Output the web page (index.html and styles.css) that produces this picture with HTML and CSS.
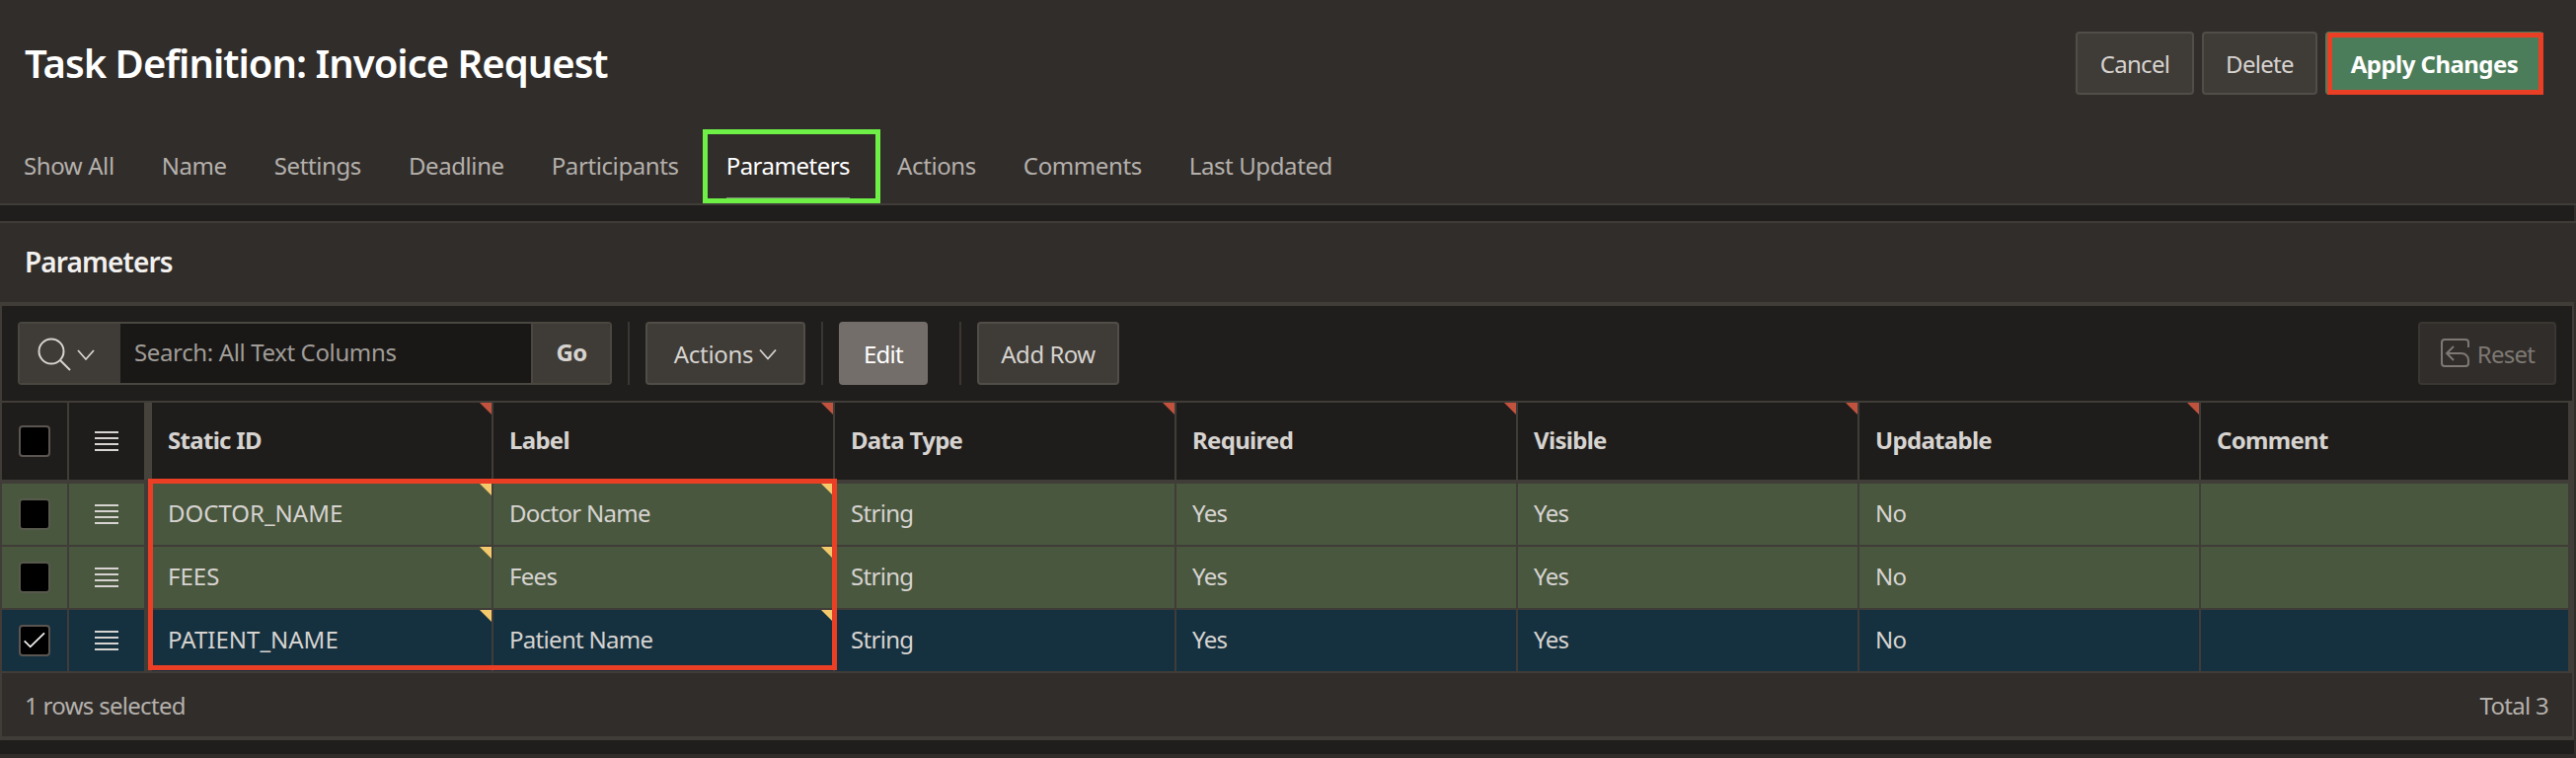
FILE: index.html
```html
<!DOCTYPE html>
<html lang="en">
<head>
<meta charset="utf-8">
<title>Task Definition: Invoice Request</title>
<link rel="stylesheet" href="styles.css">
</head>
<body>
<div class="page">
  <header class="page-head">
    <div class="title-row">
      <h1 class="title">Task Definition: Invoice Request</h1>
      <div class="actions">
        <button class="btn btn-cancel">Cancel</button>
        <button class="btn btn-delete">Delete</button>
        <button class="btn btn-apply">Apply Changes<span class="mark-red"></span></button>
      </div>
    </div>
    <nav class="tabs">
      <a class="tab">Show All</a>
      <a class="tab">Name</a>
      <a class="tab">Settings</a>
      <a class="tab">Deadline</a>
      <a class="tab">Participants</a>
      <a class="tab tab-active">Parameters<span class="mark-green"></span></a>
      <a class="tab">Actions</a>
      <a class="tab">Comments</a>
      <a class="tab">Last Updated</a>
    </nav>
  </header>
  <div class="band"></div>
  <section class="region">
    <h2 class="region-title">Parameters</h2>
    <div class="grid-panel">
      <div class="toolbar">
        <div class="search">
          <span class="search-icon">
            <svg width="102" height="60" viewBox="19 325 102 60" fill="none" stroke="#d6d3d0" stroke-width="2">
              <circle cx="51" cy="353" r="12.5"/>
              <path d="M60 362 70 372"/>
              <path d="M78 352 86 361 94 352" stroke-width="1.8"/>
            </svg>
          </span>
          <span class="search-input">Search: All Text Columns</span>
          <span class="search-go">Go</span>
        </div>
        <span class="tb-sep"></span>
        <button class="btn btn-actions">Actions
          <svg class="chev" width="18" height="12" viewBox="0 0 18 12" fill="none" stroke="#d6d3d0" stroke-width="1.8"><path d="M1 1.5 9 10.5 17 1.5"/></svg>
        </button>
        <span class="tb-sep"></span>
        <button class="btn btn-edit">Edit</button>
        <span class="tb-sep tb-sep-wide"></span>
        <button class="btn btn-add">Add Row</button>
        <button class="btn btn-reset">
          <svg width="30" height="30" viewBox="0 0 30 30" fill="none" stroke="#7d7873" stroke-width="2">
            <path d="M29 9V4A3 3 0 0 0 26 1H5A3 3 0 0 0 2 4V25A3 3 0 0 0 5 28H26A3 3 0 0 0 29 25V22A7 7 0 0 0 22 15H7"/>
            <path d="M14 8 7 15 14 22"/>
          </svg>
          Reset
        </button>
      </div>
      <div class="table">
        <div class="row row-head">
          <div class="cell cell-check"><span class="check"></span></div>
          <div class="cell cell-menu"><span class="burger"><i></i><i></i><i></i><i></i></span></div>
          <div class="cell cell-data flag-red">Static ID</div>
          <div class="cell cell-data flag-red">Label</div>
          <div class="cell cell-data flag-red">Data Type</div>
          <div class="cell cell-data flag-red">Required</div>
          <div class="cell cell-data flag-red">Visible</div>
          <div class="cell cell-data flag-red">Updatable</div>
          <div class="cell cell-last">Comment</div>
        </div>
        <div class="row row-new">
          <div class="cell cell-check"><span class="check"></span></div>
          <div class="cell cell-menu"><span class="burger"><i></i><i></i><i></i><i></i></span></div>
          <div class="cell cell-data cell-code flag-yellow">DOCTOR_NAME</div>
          <div class="cell cell-data flag-yellow">Doctor Name</div>
          <div class="cell cell-data">String</div>
          <div class="cell cell-data">Yes</div>
          <div class="cell cell-data">Yes</div>
          <div class="cell cell-data">No</div>
          <div class="cell cell-last"></div>
        </div>
        <div class="row row-new">
          <div class="cell cell-check"><span class="check"></span></div>
          <div class="cell cell-menu"><span class="burger"><i></i><i></i><i></i><i></i></span></div>
          <div class="cell cell-data cell-code flag-yellow">FEES</div>
          <div class="cell cell-data flag-yellow">Fees</div>
          <div class="cell cell-data">String</div>
          <div class="cell cell-data">Yes</div>
          <div class="cell cell-data">Yes</div>
          <div class="cell cell-data">No</div>
          <div class="cell cell-last"></div>
        </div>
        <div class="row row-selected">
          <div class="cell cell-check">
            <span class="check check-on">
              <svg width="28" height="28" viewBox="0 0 28 28" fill="none" stroke="#f2f0ee" stroke-width="1.800"><path d="M3.700 14.300 9.700 20.300 24 6.300"/></svg>
            </span>
          </div>
          <div class="cell cell-menu"><span class="burger"><i></i><i></i><i></i><i></i></span></div>
          <div class="cell cell-data cell-code flag-yellow">PATIENT_NAME</div>
          <div class="cell cell-data flag-yellow">Patient Name</div>
          <div class="cell cell-data">String</div>
          <div class="cell cell-data">Yes</div>
          <div class="cell cell-data">Yes</div>
          <div class="cell cell-data">No</div>
          <div class="cell cell-last"></div>
        </div>
        <span class="mark-cells"></span>
      </div>
      <div class="grid-foot">
        <span>1 rows selected</span>
        <span>Total 3</span>
      </div>
    </div>
  </section>
  <div class="band band-bottom"></div>
</div>
</body>
</html>
```
FILE: styles.css
```css
* { box-sizing: border-box; }
html, body { margin: 0; padding: 0; background: #312d2a; }
body { font-family: "Noto Sans", "Open Sans", sans-serif; font-size: 24px; color: #d6d3d0; }
.page { width: 2610px; height: 768px; overflow: hidden; background: #312d2a; letter-spacing: -0.7px; }

.page-head { height: 208px; border-bottom: 2px solid #403c38; }
.title-row { height: 131px; padding: 32px 33px 0 25px; display: flex; justify-content: space-between; align-items: flex-start; }
.title { margin: 0; height: 64px; line-height: 64px; font-size: 40px; font-weight: 600; color: #fff; letter-spacing: -1px; }
.actions { display: flex; gap: 8px; }

.btn { height: 64px; padding: 0; border: 2px solid #514d48; border-radius: 4px; background: #3f3b36; color: #d6d3d0; font: inherit; letter-spacing: inherit; display: inline-flex; align-items: center; justify-content: center; }
.btn-cancel { width: 120px; }
.btn-delete { width: 117px; }
.btn-apply { width: 221px; position: relative; background: #4c7d5a; border-color: #4c7d5a; color: #fff; font-weight: 700; letter-spacing: -0.55px; }
.mark-red { position: absolute; left: 0; right: -2px; top: -1px; bottom: -2px; border: 5px solid #ea3f25; }

.tabs { height: 75px; padding-left: 24px; display: flex; gap: 48px; letter-spacing: -0.4px; }
.tab { display: block; position: relative; height: 75px; line-height: 74px; color: #b4b0ac; }
.tab-active { color: #fff; letter-spacing: -0.5px; }
.tab-active::after { content: ""; position: absolute; left: 0; right: 0; bottom: 2px; height: 4px; background: #7c8f72; }
.mark-green { position: absolute; left: -24px; right: -31px; top: 0; bottom: 0; border: 5px solid #6ef047; z-index: 2; }

.band { height: 16px; width: 2608px; background: #201e1c; }
.band-bottom { height: 14px; }

.region { border-top: 2px solid #403c38; }
.region-title { margin: 0; height: 80px; padding-left: 25px; line-height: 78px; font-size: 28px; font-weight: 600; color: #f2f0ee; letter-spacing: -0.9px; }

.grid-panel { width: 2608px; height: 444px; border: solid #403c38; border-width: 4px 2px; background: #312d2a; display: flex; flex-direction: column; }

.toolbar { height: 98px; padding: 16px 16px 0; display: flex; background: #201e1c; border-bottom: 2px solid #403c38; }
.search { width: 602px; height: 64px; display: flex; border: 2px solid #4a4640; border-radius: 4px; overflow: hidden; }
.search-icon { width: 102px; background: #3f3b36; display: flex; align-items: center; justify-content: center; }
.search-input { flex: 1; background: #191816; color: #a09c98; line-height: 58px; padding-left: 14px; letter-spacing: -0.37px; }
.search-go { width: 80px; background: #3f3b36; border-left: 2px solid #4a4640; text-align: center; line-height: 58px; font-weight: 700; }
.tb-sep { width: 2px; height: 64px; margin: 0 16px; background: #3a3632; }
.tb-sep-wide { margin-left: 32px; }
.btn-actions { width: 162px; gap: 6px; letter-spacing: -0.3px; }
.chev { margin-top: 2px; }
.btn-edit { width: 90px; background: #736e69; border-color: #736e69; color: #fff; }
.btn-add { width: 144px; letter-spacing: -0.5px; }
.btn-reset { width: 140px; margin-left: auto; gap: 8px; background: #312d2a; border-color: #3a3632; color: #7d7873; }

.table { position: relative; background: #403c38; padding-right: 4px; }
.row { display: grid; grid-template-columns: 68px 84px repeat(6, 346px) 372px; height: 64px; border-bottom: 2px solid #403c38; }
.row-head { height: 82px; border-bottom: 4px solid #403c38; background: #1f1d1b; font-weight: 700; }
.row-new { background: #49573e; }
.row-selected { background: #15303f; }
.cell { position: relative; display: flex; align-items: center; border-right: 2px solid #403c38; }
.cell-check { justify-content: center; }
.cell-menu { justify-content: center; border-right-width: 8px; }
.row-head .cell-menu { border-right-color: #46423c; }
.cell-data { padding-left: 16px; padding-bottom: 4px; }
.cell-code { letter-spacing: 0; }
.cell-last { padding-left: 16px; padding-bottom: 4px; border-right: 0; }
.flag-red::after, .flag-yellow::after { content: ""; position: absolute; top: 0; right: 0; width: 12px; height: 12px; clip-path: polygon(0 0, 100% 0, 100% 100%); }
.flag-red::after { background: #c1523e; }
.flag-yellow::after { background: #f4c96b; }

.check { width: 32px; height: 32px; background: #000; border: 2px solid #5a5550; border-radius: 4px; display: flex; align-items: center; justify-content: center; }
.row-new .check { border-color: #56594c; }
.burger { width: 24px; display: flex; flex-direction: column; gap: 4px; }
.burger i { display: block; height: 2px; background: #d6d3d0; }

.mark-cells { position: absolute; left: 148px; top: 77px; width: 698px; height: 194px; border: 5px solid #ea3f25; pointer-events: none; }

.grid-foot { flex: 1; display: flex; justify-content: space-between; align-items: center; padding: 0 24px 0 23px; color: #b4b0ac; background: #312d2a; }
```
